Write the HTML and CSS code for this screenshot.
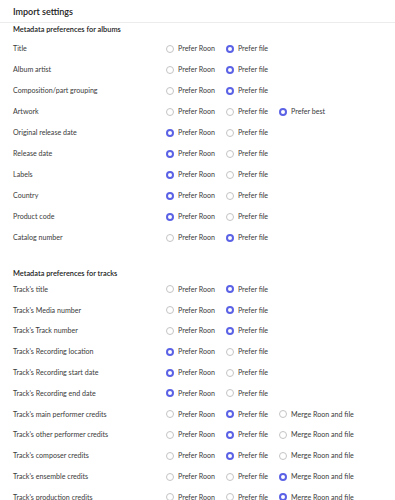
FILE: index.html
```html
<!DOCTYPE html>
<html lang="en">
<head>
    <meta charset="UTF-8">
    <meta name="viewport" content="width=device-width, initial-scale=1.0">
    <title>Import settings</title>
    <link rel="stylesheet" href="styles.css">
</head>
<body>
    <div class="header">Import settings</div>

    <div class="section">
        <div class="section-title">Metadata preferences for albums</div>

        <div class="row"><span class="label">Title</span>
            <span class="opt"><i class="radio"></i>Prefer Roon</span>
            <span class="opt"><i class="radio on"></i>Prefer file</span></div>
        <div class="row"><span class="label">Album artist</span>
            <span class="opt"><i class="radio"></i>Prefer Roon</span>
            <span class="opt"><i class="radio on"></i>Prefer file</span></div>
        <div class="row"><span class="label">Composition/part grouping</span>
            <span class="opt"><i class="radio"></i>Prefer Roon</span>
            <span class="opt"><i class="radio on"></i>Prefer file</span></div>
        <div class="row"><span class="label">Artwork</span>
            <span class="opt"><i class="radio"></i>Prefer Roon</span>
            <span class="opt"><i class="radio"></i>Prefer file</span>
            <span class="opt"><i class="radio on"></i>Prefer best</span></div>
        <div class="row"><span class="label">Original release date</span>
            <span class="opt"><i class="radio on"></i>Prefer Roon</span>
            <span class="opt"><i class="radio"></i>Prefer file</span></div>
        <div class="row"><span class="label">Release date</span>
            <span class="opt"><i class="radio on"></i>Prefer Roon</span>
            <span class="opt"><i class="radio"></i>Prefer file</span></div>
        <div class="row"><span class="label">Labels</span>
            <span class="opt"><i class="radio on"></i>Prefer Roon</span>
            <span class="opt"><i class="radio"></i>Prefer file</span></div>
        <div class="row"><span class="label">Country</span>
            <span class="opt"><i class="radio on"></i>Prefer Roon</span>
            <span class="opt"><i class="radio"></i>Prefer file</span></div>
        <div class="row"><span class="label">Product code</span>
            <span class="opt"><i class="radio on"></i>Prefer Roon</span>
            <span class="opt"><i class="radio"></i>Prefer file</span></div>
        <div class="row"><span class="label">Catalog number</span>
            <span class="opt"><i class="radio"></i>Prefer Roon</span>
            <span class="opt"><i class="radio on"></i>Prefer file</span></div>
    </div>

    <div class="section tracks">
        <div class="section-title">Metadata preferences for tracks</div>

        <div class="row"><span class="label">Track's title</span>
            <span class="opt"><i class="radio"></i>Prefer Roon</span>
            <span class="opt"><i class="radio on"></i>Prefer file</span></div>
        <div class="row"><span class="label">Track's Media number</span>
            <span class="opt"><i class="radio"></i>Prefer Roon</span>
            <span class="opt"><i class="radio on"></i>Prefer file</span></div>
        <div class="row"><span class="label">Track's Track number</span>
            <span class="opt"><i class="radio"></i>Prefer Roon</span>
            <span class="opt"><i class="radio on"></i>Prefer file</span></div>
        <div class="row"><span class="label">Track's Recording location</span>
            <span class="opt"><i class="radio on"></i>Prefer Roon</span>
            <span class="opt"><i class="radio"></i>Prefer file</span></div>
        <div class="row"><span class="label">Track's Recording start date</span>
            <span class="opt"><i class="radio on"></i>Prefer Roon</span>
            <span class="opt"><i class="radio"></i>Prefer file</span></div>
        <div class="row"><span class="label">Track's Recording end date</span>
            <span class="opt"><i class="radio on"></i>Prefer Roon</span>
            <span class="opt"><i class="radio"></i>Prefer file</span></div>
        <div class="row"><span class="label">Track's main performer credits</span>
            <span class="opt"><i class="radio"></i>Prefer Roon</span>
            <span class="opt"><i class="radio on"></i>Prefer file</span>
            <span class="opt"><i class="radio"></i>Merge Roon and file</span></div>
        <div class="row"><span class="label">Track's other performer credits</span>
            <span class="opt"><i class="radio"></i>Prefer Roon</span>
            <span class="opt"><i class="radio on"></i>Prefer file</span>
            <span class="opt"><i class="radio"></i>Merge Roon and file</span></div>
        <div class="row"><span class="label">Track's composer credits</span>
            <span class="opt"><i class="radio"></i>Prefer Roon</span>
            <span class="opt"><i class="radio on"></i>Prefer file</span>
            <span class="opt"><i class="radio"></i>Merge Roon and file</span></div>
        <div class="row"><span class="label">Track's ensemble credits</span>
            <span class="opt"><i class="radio"></i>Prefer Roon</span>
            <span class="opt"><i class="radio"></i>Prefer file</span>
            <span class="opt"><i class="radio on"></i>Merge Roon and file</span></div>
        <div class="row"><span class="label">Track's production credits</span>
            <span class="opt"><i class="radio"></i>Prefer Roon</span>
            <span class="opt"><i class="radio"></i>Prefer file</span>
            <span class="opt"><i class="radio on"></i>Merge Roon and file</span></div>
    </div>
</body>
</html>
```

FILE: styles.css
```css
body {
    margin: 0;
    background: #fff;
    font-family: 'Lato', 'Liberation Sans', sans-serif;
    color: #333;
    overflow: hidden;
}

.header {
    padding: 5px 13px 4px;
    font-size: 9px;
    line-height: 13px;
    font-weight: 600;
    color: #222;
    border-bottom: 1px solid #ececec;
}

.section {
    padding: 0 13px;
}
.section-title {
    font-size: 7.4px;
    line-height: 11px;
    font-weight: 600;
    color: #222;
    margin-top: 1px;
    margin-bottom: 3px;
}
.tracks .section-title {
    margin-top: 20px;
    margin-bottom: 0;
}

.row {
    display: flex;
    align-items: center;
    height: 21px;
    font-size: 7.1px;
    color: #3a3a3a;
    white-space: nowrap;
}
.tracks .row {
    height: 20.8px;
}
.label {
    width: 153px;
    flex-shrink: 0;
}
.opt {
    display: flex;
    align-items: center;
    flex-shrink: 0;
    gap: 4px;
    margin-right: 11px;
}
.radio {
    width: 8px;
    height: 8px;
    box-sizing: border-box;
    border-radius: 50%;
    border: 1px solid #c4c4c4;
    background: #fff;
}
.radio.on {
    border: 2.4px solid #5b62e6;
}
```
